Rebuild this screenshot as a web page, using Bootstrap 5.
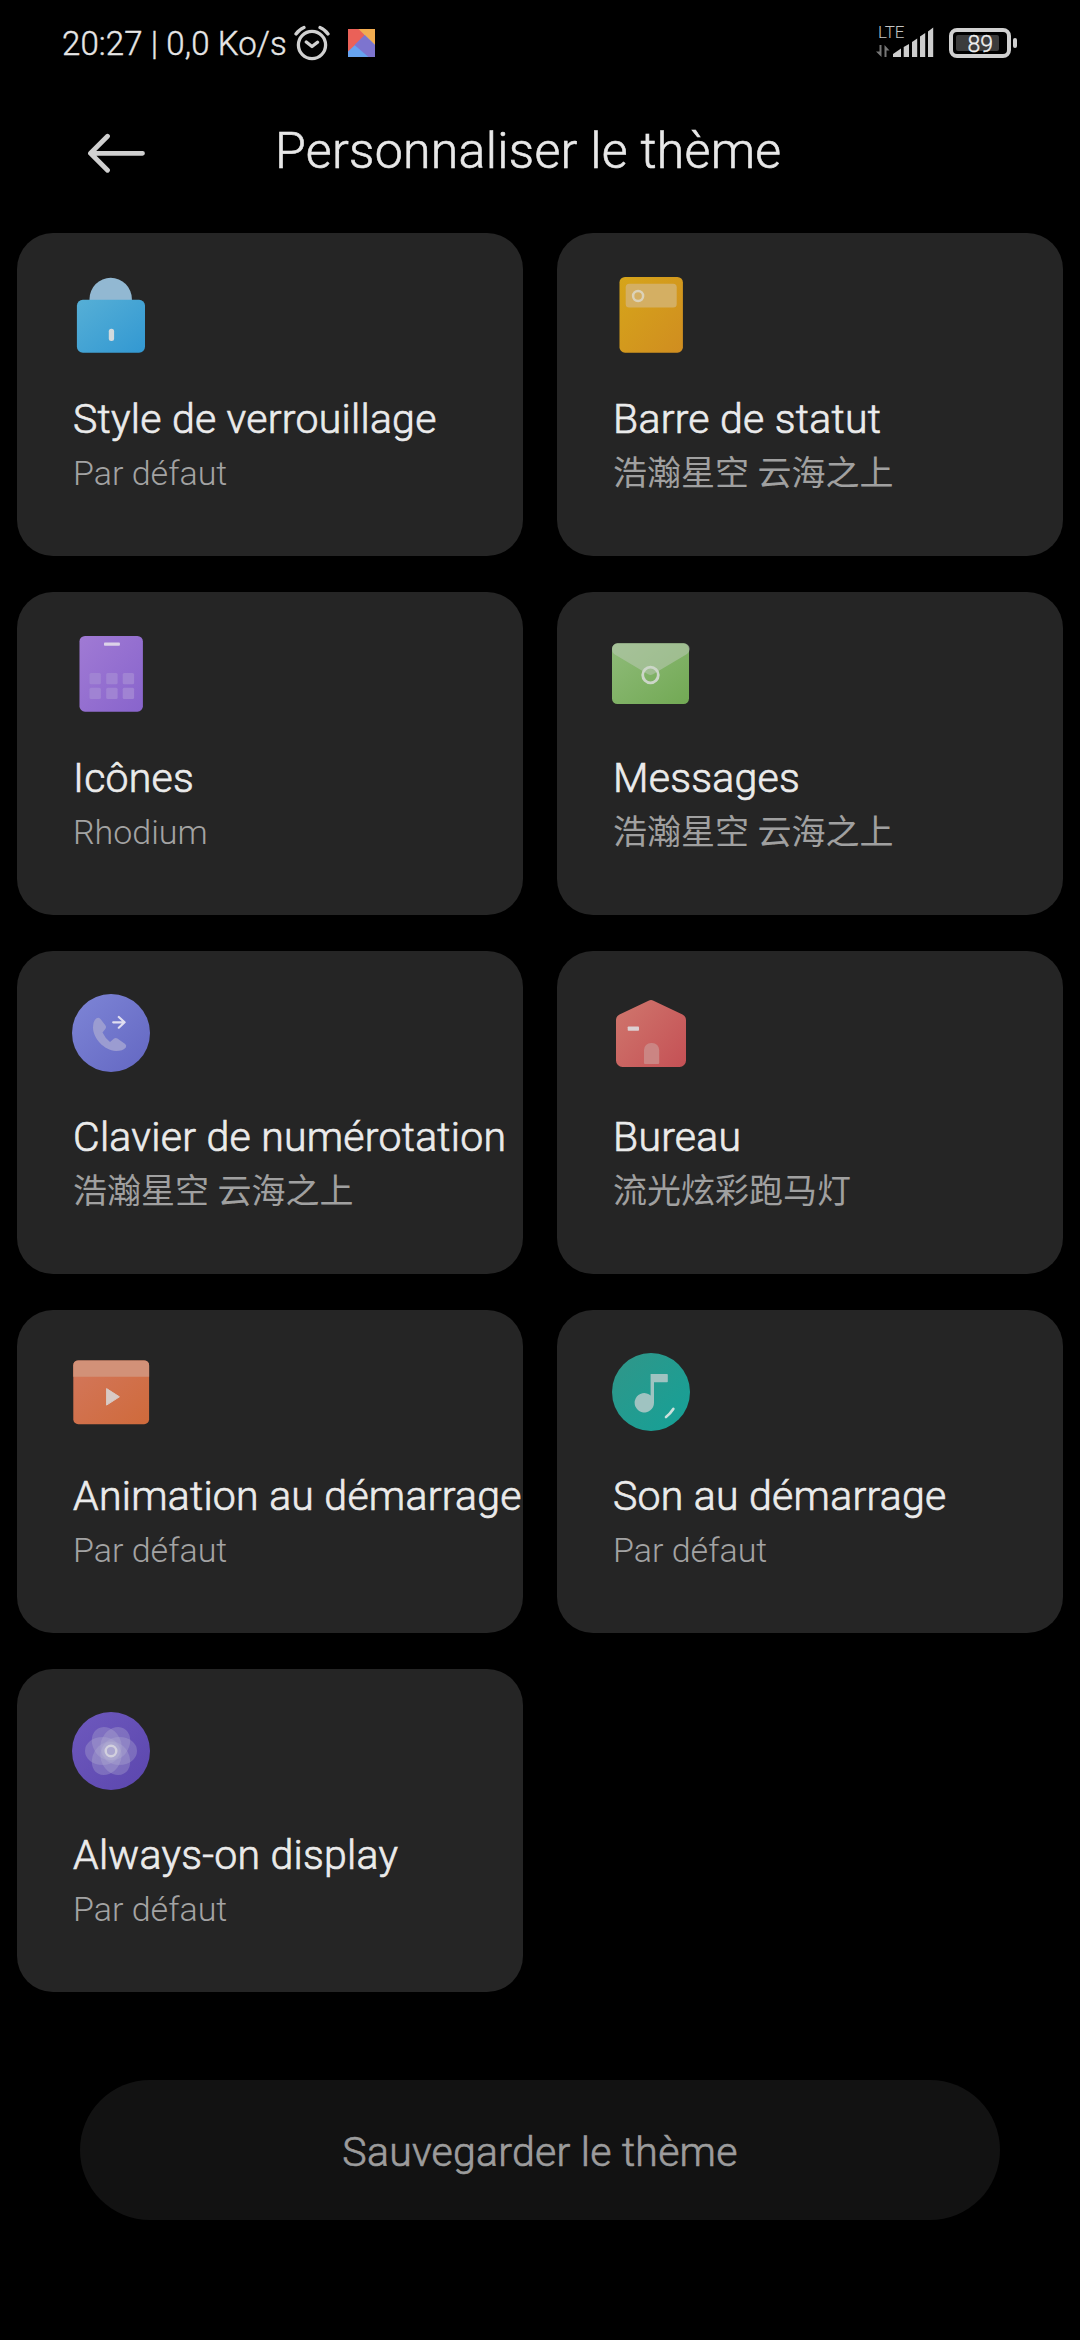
<!DOCTYPE html>
<html lang="fr" data-bs-theme="dark">
<head>
<meta charset="utf-8">
<meta name="viewport" content="width=device-width, initial-scale=1">
<title>Personnaliser le thème</title>
<link href="https://cdn.jsdelivr.net/npm/bootstrap@5.3.0/dist/css/bootstrap.min.css" rel="stylesheet">
<style>
body{background:#000;font-family:Roboto,"Noto Sans CJK SC",sans-serif;color:#e8e8e8}
.screen{width:1080px;height:2340px;overflow:hidden}
.statusbar{height:86px;padding:0 62px 0 62px}
.statusbar svg{display:block;flex:none}
.clock{font-size:33px;line-height:44px;font-weight:300;color:#e6e6e6;white-space:nowrap;width:232px;letter-spacing:.1px;padding-top:2px;-webkit-text-stroke:.4px #e6e6e6}
.topbar{height:147px;padding:29px 0 0 88px}
.topbar .back{width:58px;height:40px;margin-top:18px}
.topbar h1{font-size:50px;line-height:60px;font-weight:300;letter-spacing:.3px;margin:6px 0 0 129px;white-space:nowrap;color:#e8e8e8;-webkit-text-stroke:.6px #e8e8e8}
.tiles{padding:0 17px;display:grid;grid-template-columns:506px 506px;gap:36px 34px}
.tile{height:323px;border:0;border-radius:36px;background:#252525;padding:43px 0 0 55px}
.tile svg{width:78px;height:78px;display:block;flex:none}
.tile h2{font-size:41px;line-height:48px;font-weight:300;letter-spacing:.25px;-webkit-text-stroke:.7px #ebebeb;margin:41px 0 0 1px;white-space:nowrap;color:#ebebeb}
.tile p{font-size:34px;line-height:48px;font-weight:300;margin:6px 0 0 1px;white-space:nowrap;color:#a3a3a3}
.tile p:lang(zh){font-weight:400;color:#a0a0a0}
.save{width:920px;height:140px;border:0;border-radius:70px;background:#121212;color:#9c9c9c;font-size:41px;line-height:48px;font-weight:300;letter-spacing:.25px;-webkit-text-stroke:.7px #9c9c9c;margin:88px auto 0;padding-top:9px}
.lte{font-size:17px;font-weight:300}
.pct{font-size:23px;font-weight:300;stroke:#f0f0f0;stroke-width:.4px}
</style>
</head>
<body>
<main class="screen d-flex flex-column">
  <header class="statusbar d-flex align-items-center justify-content-between">
    <div class="d-flex align-items-center">
      <span class="clock">20:27 | 0,0 Ko/s</span>
      <svg width="36" height="36" viewBox="294 25 36 36" fill="none" stroke="#d0d0d0" stroke-width="3.3" stroke-linecap="round" stroke-linejoin="round"><circle cx="312" cy="45" r="13.6"/><path d="M306.3 42l5.7 4.5 5.5-4.3M296 34q3-4.500 8-6.500M320 27.500q5 2 8 6.500"/></svg>
      <svg class="ms-3" width="30" height="36" viewBox="346 25 30 36"><path fill="#66a3f0" d="M348 29h27v28h-27z"/><path fill="#ea6158" d="M348 29h12l5 6.500-17 16z"/><path fill="#f2ac50" d="M358.500 29H375v16z"/><path fill="#7d74cf" d="M364.700 35L375 45v12h-6.500L354.500 45z"/></svg>
    </div>
    <svg width="142" height="40" viewBox="876 23 142 40">
      <text class="lte" x="878" y="38" fill="#c4c4c4">LTE</text>
      <path fill="#777" d="M879.500 45h2v12l-5.500-5.500h3.500zM884.500 45l5 5.500h-3V57h-2z"/>
      <path fill="#cdcdcd" d="M893 57v-3l8-5.500V57zM903.700 57V47l5.300-3v13zM912 57V42l5.200-3.500V57zM920 57V36.500l5.200-3.500v24zM928 57V31.500l5.200-4V57z"/>
      <rect x="951" y="30" width="58" height="26" rx="6" fill="none" stroke="#d0d0d0" stroke-width="4"/>
      <rect x="956" y="35" width="43" height="16" rx="2" fill="#3c3c3c"/>
      <rect x="1013" y="38" width="4" height="10" rx="2" fill="#d0d0d0"/>
      <text class="pct" x="967.500" y="51.500" fill="#f0f0f0">89</text>
    </svg>
  </header>

  <nav class="topbar d-flex align-items-start">
    <svg class="back" viewBox="88 133 58 40" fill="none" stroke="#d0d0d0" stroke-width="4.800" stroke-linecap="round" stroke-linejoin="round"><path d="M142.500 153.300H91M107.500 136.300L90.500 153.300l17 17"/></svg>
    <h1>Personnaliser le thème</h1>
  </nav>

  <section class="tiles">
    <article class="card tile">
      <svg viewBox="0 0 78 78"><defs><linearGradient id="g1" x1="0" y1="0" x2="1" y2="1"><stop stop-color="#56afd6"/><stop offset="1" stop-color="#3298d2"/></linearGradient></defs><path fill="#92b8d2" d="M17.500 24v-1a21.200 21.200 0 0 1 42.400 0v1z"/><rect x="4.900" y="23.700" width="68.100" height="53" rx="6" fill="url(#g1)"/><rect x="36.800" y="52.700" width="5.300" height="12.300" rx="2.500" fill="#d3dadd"/></svg>
      <h2>Style de verrouillage</h2><p>Par défaut</p>
    </article>
    <article class="card tile">
      <svg viewBox="0 0 78 78"><defs><linearGradient id="g2" x1="0" y1="0" x2="1" y2="1"><stop stop-color="#d6a51a"/><stop offset="1" stop-color="#d08d20"/></linearGradient></defs><rect x="7.500" y="1" width="63.400" height="75.700" rx="5.500" fill="url(#g2)"/><rect x="13.700" y="7.700" width="51" height="23.700" rx="3.500" fill="#d4af63"/><circle cx="26.100" cy="20" r="5" fill="none" stroke="#dcd2b8" stroke-width="2.500"/></svg>
      <h2>Barre de statut</h2><p lang="zh-CN">浩瀚星空 云海之上</p>
    </article>
    <article class="card tile">
      <svg viewBox="0 0 78 78"><defs><linearGradient id="g3" x1="0" y1="0" x2="1" y2="1"><stop stop-color="#a07ad4"/><stop offset="1" stop-color="#8864cc"/></linearGradient></defs><rect x="7.500" y="1" width="63.400" height="75.700" rx="5.500" fill="url(#g3)"/><rect x="32" y="7.600" width="15.900" height="3.200" rx=".8" fill="#dcd2e8"/><g fill="#a083d3"><rect x="17.500" y="38" width="11.400" height="11.200" rx="1.500"/><rect x="34.200" y="38" width="11.400" height="11.200" rx="1.500"/><rect x="50.700" y="38" width="11.400" height="11.200" rx="1.500"/><rect x="17.500" y="52.700" width="11.400" height="11.200" rx="1.500"/><rect x="34.200" y="52.700" width="11.400" height="11.200" rx="1.500"/><rect x="50.700" y="52.700" width="11.400" height="11.200" rx="1.500"/></g></svg>
      <h2>Icônes</h2><p>Rhodium</p>
    </article>
    <article class="card tile">
      <svg viewBox="0 0 78 78"><defs><linearGradient id="g4" x1="0" y1="0" x2="1" y2="1"><stop stop-color="#8fbb79"/><stop offset="1" stop-color="#72a954"/></linearGradient></defs><rect y="8.300" width="77" height="60.700" rx="5.500" fill="url(#g4)"/><path fill="#bac8b4" fill-opacity=".55" d="M5.500 8.300H72a5.700 5.700 0 0 1 5.700 5.700q0 3-2.700 5L41 39.200q-2.500 1.500-5 0L2 19q-2-1.500-2-5a5.600 5.600 0 0 1 5.500-5.700z"/><circle cx="38.500" cy="40" r="7.800" fill="none" stroke="#ccd6c8" stroke-width="2.800"/></svg>
      <h2>Messages</h2><p lang="zh-CN">浩瀚星空 云海之上</p>
    </article>
    <article class="card tile">
      <svg viewBox="0 0 78 78"><defs><linearGradient id="g5" x1=".1" y1=".1" x2=".9" y2=".9"><stop stop-color="#7b82d4"/><stop offset="1" stop-color="#666ac4"/></linearGradient></defs><circle cx="39" cy="39" r="39" fill="url(#g5)"/><path fill="#9b9cd1" d="M24.500 24.300q2-1.200 4 .7l5 6.500q1.200 1.600 0 3.200l-3 3.800q2.500 5.500 7.500 9.500l3.800-3.200q1.600-1.600 3.600-.3l7.800 5.500q1.800 1.700.6 3.500-2.800 3.500-9.800 3.500C32 56.500 21 44 21 33.500q0-6.500 3.500-9.200z"/><path fill="none" stroke="#e0def0" stroke-width="2.200" stroke-linecap="round" stroke-linejoin="round" d="M41.200 28.300H52M46.800 23l5.800 5.300-5.800 5.400"/></svg>
      <h2>Clavier de numérotation</h2><p lang="zh-CN">浩瀚星空 云海之上</p>
    </article>
    <article class="card tile">
      <svg viewBox="0 0 78 78"><defs><linearGradient id="g6" x1="0" y1=".1" x2="1" y2=".9"><stop stop-color="#cf756c"/><stop offset="1" stop-color="#c55256"/></linearGradient></defs><path fill="url(#g6)" d="M36.500 6.700q2.500-1.200 5 0L70.500 20.500Q74 22.500 74 26v40.500a6.500 6.500 0 0 1-6.500 6.500h-57A6.500 6.500 0 0 1 4 66.500V26q0-3.500 3.500-5.500z"/><rect x="15.700" y="32.500" width="11.300" height="4.200" rx=".8" fill="#dcd0d2"/><path fill="#cb8583" d="M32 70V56a7 7 0 0 1 7-7h1.200a7 7 0 0 1 7 7v13q0 1-1 1H33q-1 0-1-1z"/></svg>
      <h2>Bureau</h2><p lang="zh-CN">流光炫彩跑马灯</p>
    </article>
    <article class="card tile">
      <svg viewBox="0 0 78 78"><defs><linearGradient id="g7" x1="0" y1="0" x2="1" y2="1"><stop stop-color="#d3775c"/><stop offset="1" stop-color="#cf6a3b"/></linearGradient></defs><rect x="1.300" y="7.400" width="75.800" height="63.900" rx="5" fill="url(#g7)"/><path fill="#d29178" d="M1.300 23.700V12.400a5 5 0 0 1 5-5h65.800a5 5 0 0 1 5 5v11.300z"/><path fill="#d8cac6" stroke="#d8cac6" stroke-linejoin="round" d="M34.600 35.600l12.800 8.200-12.800 8.300z"/></svg>
      <h2>Animation au démarrage</h2><p>Par défaut</p>
    </article>
    <article class="card tile">
      <svg viewBox="0 0 78 78"><defs><linearGradient id="g8" x1=".1" y1=".1" x2=".9" y2=".9"><stop stop-color="#2e978a"/><stop offset="1" stop-color="#17a096"/></linearGradient></defs><circle cx="39" cy="39" r="39" fill="url(#g8)"/><path fill="#9fc3c1" d="M38.600 21H55q.8 0 .8.800v6.700q0 .8-.8.800H42v20.400a9.700 9.700 0 1 1-3.400-7.300z"/><path fill="none" stroke="#cce0dc" stroke-width="2.700" stroke-linecap="round" d="M54 64q4-3 7.300-8"/></svg>
      <h2>Son au démarrage</h2><p>Par défaut</p>
    </article>
    <article class="card tile">
      <svg viewBox="0 0 78 78"><defs><linearGradient id="g9" x1=".1" y1=".1" x2=".9" y2=".9"><stop stop-color="#6c57bc"/><stop offset="1" stop-color="#5d48af"/></linearGradient></defs><circle cx="39" cy="39" r="39" fill="url(#g9)"/><g fill="#b4b2d2" fill-opacity=".32"><ellipse cx="47.500" cy="39" rx="17.500" ry="14"/><ellipse cx="47.500" cy="39" rx="17.500" ry="14" transform="rotate(60 39 39)"/><ellipse cx="47.500" cy="39" rx="17.500" ry="14" transform="rotate(120 39 39)"/><ellipse cx="47.500" cy="39" rx="17.500" ry="14" transform="rotate(180 39 39)"/><ellipse cx="47.500" cy="39" rx="17.500" ry="14" transform="rotate(240 39 39)"/><ellipse cx="47.500" cy="39" rx="17.500" ry="14" transform="rotate(300 39 39)"/></g><circle cx="39" cy="39" r="5.300" fill="none" stroke="#d2d0de" stroke-width="2.400"/></svg>
      <h2>Always-on display</h2><p>Par défaut</p>
    </article>
  </section>

  <button type="button" class="btn save">Sauvegarder le thème</button>
</main>
<script src="https://cdn.jsdelivr.net/npm/bootstrap@5.3.0/dist/js/bootstrap.bundle.min.js"></script>
</body>
</html>
